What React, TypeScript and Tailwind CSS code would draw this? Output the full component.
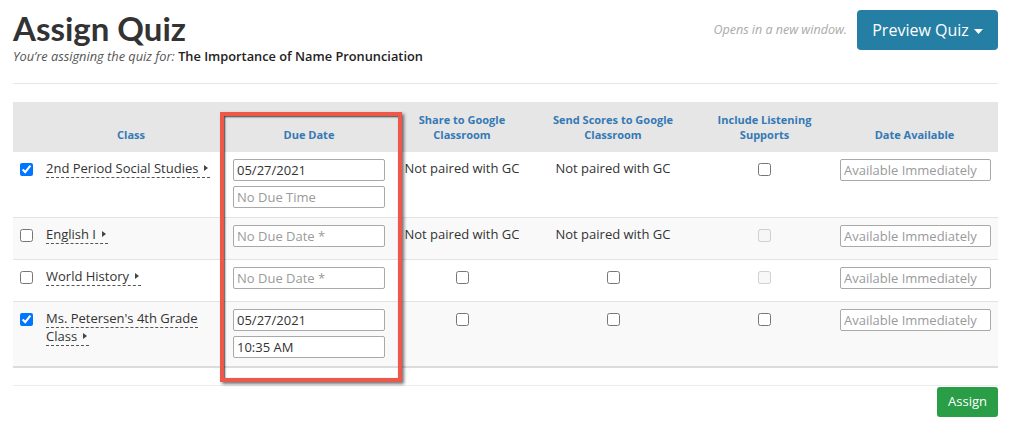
type ClassRow = {
  name: string;
  checked: boolean;
  dueDate: string;
  dueTime?: string;
  showTime: boolean;
  paired: boolean;
  listeningDisabled: boolean;
  height: string;
  striped: boolean;
};

const rows: ClassRow[] = [
  { name: '2nd Period Social Studies', checked: true, dueDate: '05/27/2021', showTime: true, paired: false, listeningDisabled: false, height: 'h-[65px]', striped: false },
  { name: 'English I', checked: false, dueDate: '', showTime: false, paired: false, listeningDisabled: true, height: 'h-[42px]', striped: true },
  { name: 'World History', checked: false, dueDate: '', showTime: false, paired: true, listeningDisabled: true, height: 'h-[42px]', striped: false },
  { name: "Ms. Petersen's 4th Grade Class", checked: true, dueDate: '05/27/2021', dueTime: '10:35 AM', showTime: true, paired: true, listeningDisabled: false, height: 'h-[66px]', striped: true },
];

const inputCls =
  'block h-[22px] w-full rounded-[2px] border border-[#a9a9a9] bg-white px-[3px] text-[13px] text-[#333] placeholder:text-[#9a9a9a] outline-none';

const thCls = 'align-bottom pb-[10px] px-1 text-center text-[11px] font-bold leading-[15px] text-[#3379b5]';

const App = () => {
  return (
    <div className="min-h-screen bg-white pl-[13px] pr-[11px] font-['Open_Sans',sans-serif] text-[#333]">
      <div className="flex items-start justify-between border-b border-[#e6e6e6] pb-[18px] pt-[10px]">
        <div>
          <h1 className="font-['Lato',sans-serif] text-[33px] font-bold leading-[36px] text-[#333]">Assign Quiz</h1>
          <p className="mt-[2px] text-[12.8px] leading-[17px]">
            <span className="italic text-[#555]">You’re assigning the quiz for: </span>
            <span className="font-semibold text-[#222]">The Importance of Name Pronunciation</span>
          </p>
        </div>
        <div className="flex items-center gap-[10px]">
          <span className="text-[12.5px] italic text-[#aaa]">Opens in a new window.</span>
          <button className="flex h-[40px] w-[141px] items-center justify-center gap-[5px] rounded-[4px] bg-[#257ea3] text-[16px] text-white">
            Preview Quiz
            <svg width="9" height="5" viewBox="0 0 9 5" className="mt-[2px]">
              <path d="M0 0h9L4.5 5z" fill="white" />
            </svg>
          </button>
        </div>
      </div>

      <div className="relative mt-[18px]">
        <table className="w-full table-fixed border-collapse">
          <colgroup>
            <col className="w-[27px]" />
            <col className="w-[182px]" />
            <col className="w-[174px]" />
            <col className="w-[132px]" />
            <col className="w-[170px]" />
            <col className="w-[133px]" />
            <col className="w-[167px]" />
          </colgroup>
          <thead>
            <tr className="h-[50px] bg-[#e6e6e6]">
              <th className={thCls}></th>
              <th className={thCls}>Class</th>
              <th className={thCls}>Due Date</th>
              <th className={thCls}>Share to Google<br />Classroom</th>
              <th className={thCls}>Send Scores to Google<br />Classroom</th>
              <th className={thCls}>Include Listening<br />Supports</th>
              <th className={thCls}>Date Available</th>
            </tr>
          </thead>
          <tbody>
            {rows.map((row, i) => (
              <tr
                key={row.name}
                className={`${row.height} ${row.striped ? 'bg-[#f9f9f9]' : 'bg-white'} ${i === rows.length - 1 ? 'border-b-2 border-[#dcdcdc]' : 'border-b border-[#e3e3e3]'}`}
              >
                <td className="pl-[7px] pt-[11px] align-top">
                  <input type="checkbox" defaultChecked={row.checked} className="m-0 block h-[13px] w-[13px]" />
                </td>
                <td className="pl-[6px] pr-[4px] pt-[7px] align-top text-[13px] leading-[18px]">
                  <span className="border-b border-dashed border-[#555]">
                    {row.name}
                    <svg width="4" height="6" viewBox="0 0 4 6" className="ml-[6px] mr-[2px] inline-block align-[2px]">
                      <path d="M0 0L4 3L0 6z" fill="#444" />
                    </svg>
                  </span>
                </td>
                <td className="px-[11px] pt-[7px] align-top">
                  <input className={inputCls} defaultValue={row.dueDate} placeholder={row.showTime ? '' : 'No Due Date *'} />
                  {row.showTime && (
                    <input className={`${inputCls} mt-[5px]`} defaultValue={row.dueTime ?? ''} placeholder="No Due Time" />
                  )}
                </td>
                <td className="pt-[7px] text-center align-top text-[13px] leading-[18px]">
                  {row.paired ? (
                    <input type="checkbox" className="mx-auto mt-[4px] block h-[13px] w-[13px]" />
                  ) : (
                    'Not paired with GC'
                  )}
                </td>
                <td className="pt-[7px] text-center align-top text-[13px] leading-[18px]">
                  {row.paired ? (
                    <input type="checkbox" className="mx-auto mt-[4px] block h-[13px] w-[13px]" />
                  ) : (
                    'Not paired with GC'
                  )}
                </td>
                <td className="pt-[11px] align-top">
                  <input type="checkbox" disabled={row.listeningDisabled} className="mx-auto block h-[13px] w-[13px]" />
                </td>
                <td className="pl-[9px] pr-[7px] pt-[7px] align-top">
                  <input className={inputCls} placeholder="Available Immediately" />
                </td>
              </tr>
            ))}
          </tbody>
        </table>

        {/* annotation box around the Due Date column */}
        <div className="pointer-events-none absolute left-[207px] top-[10px] h-[270px] w-[182px] border-[4px] border-[#ee584b] shadow-[inset_1px_1px_2px_rgba(0,0,0,0.75),2px_2px_3px_rgba(0,0,0,0.55)]" />
      </div>

      <div className="mt-[17px] flex justify-end border-t border-[#ececec] pt-[1px]">
        <button className="h-[30px] w-[61px] rounded-[3px] bg-[#2a9d47] text-[13px] text-white">Assign</button>
      </div>
    </div>
  );
};

export default App;
